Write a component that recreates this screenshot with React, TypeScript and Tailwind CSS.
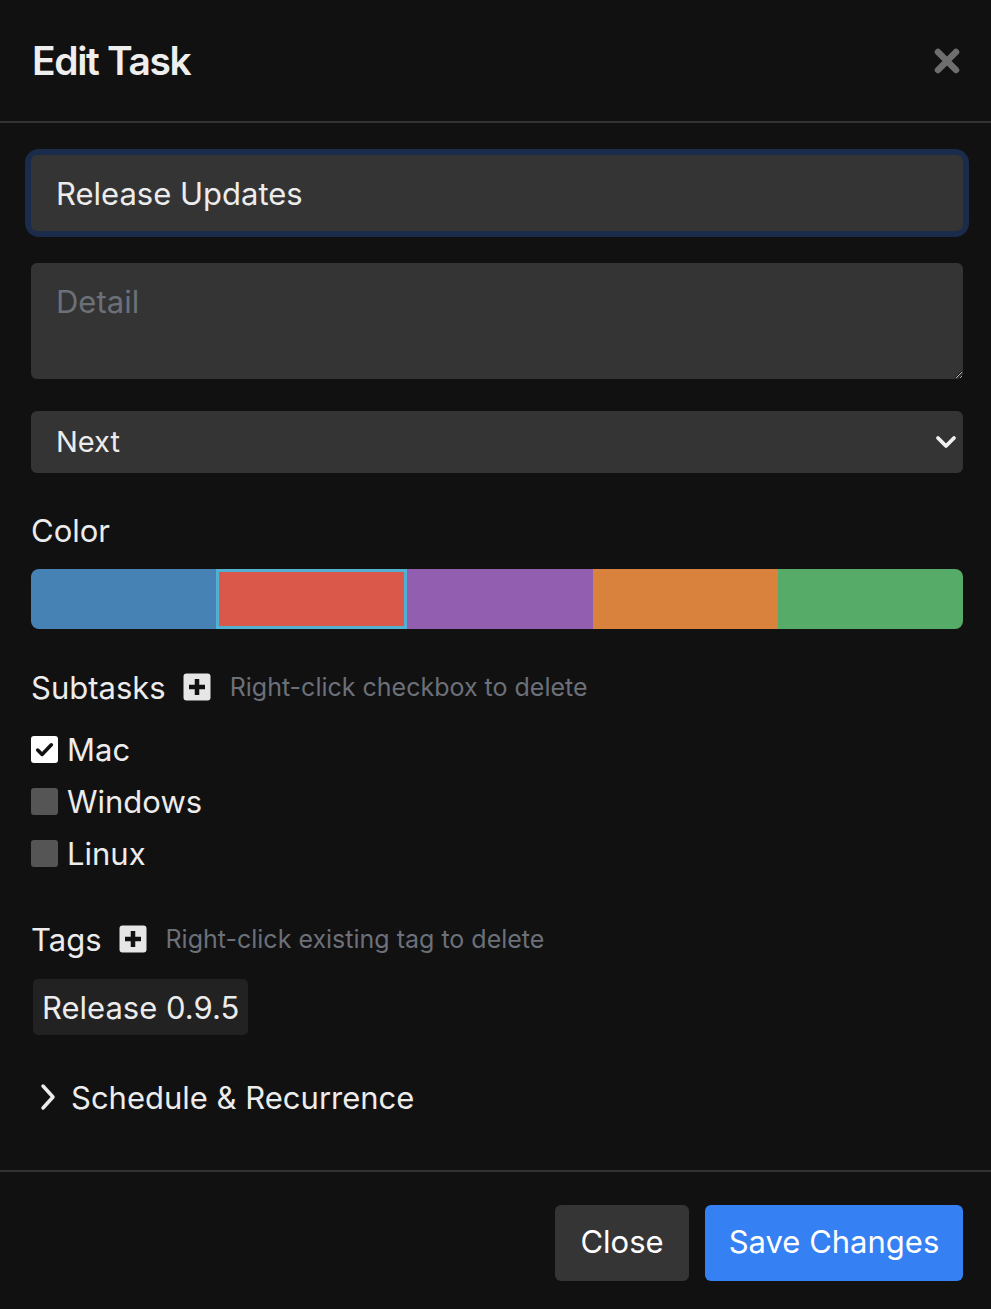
import React from "react";

const font = { fontFamily: "Inter, 'Noto Sans', sans-serif" };

function PlusBox() {
  return (
    <svg width="28" height="28" viewBox="0 0 28 28" className="shrink-0">
      <rect x="0.5" y="0.5" width="27" height="27" rx="3" fill="#e6e6e6" />
      <path d="M14 6v16M6 14h16" stroke="#111" strokeWidth="4.5" strokeLinecap="butt" />
    </svg>
  );
}

function Check({ checked, label }: { checked: boolean; label: string }) {
  return (
    <div className="flex items-center h-[52px]">
      <div
        className={`w-[27px] h-[27px] rounded-[3px] flex items-center justify-center ${
          checked ? "bg-white" : "bg-[#555555]"
        }`}
      >
        {checked && (
          <svg width="21" height="21" viewBox="0 0 20 20">
            <path d="M3.5 10.5l4.2 4.2 8.8-9.2" fill="none" stroke="#111" strokeWidth="3.4" strokeLinecap="round" strokeLinejoin="round" />
          </svg>
        )}
      </div>
      <span className="ml-[9px] text-[31px] text-[#ececec] leading-none">{label}</span>
    </div>
  );
}

export default function App() {
  const colors = ["#4682b4", "#d9584a", "#925fb0", "#d9823e", "#57ab69"];
  return (
    <div className="w-[991px] h-[1309px] bg-[#111111] flex flex-col text-[#ececec]" style={font}>
      <div className="h-[123px] flex items-center justify-between pl-[32px] pr-[30px] border-b-2 border-[#333333] shrink-0">
        <h1 className="text-[39px] font-semibold tracking-[-0.035em] text-[#eeeeee] leading-none">Edit Task</h1>
        <svg width="28" height="28" viewBox="0 0 28 28">
          <path d="M5 5l18 18M23 5L5 23" stroke="#6e6e6e" strokeWidth="6.5" strokeLinecap="round" />
        </svg>
      </div>

      <div className="flex-1 flex flex-col pl-[31px] pr-[28px] pt-[32px]">
        <div className="rounded-[8px] ring-[6px] ring-[#1b2b4b]">
          <input
            className="w-full h-[76px] bg-[#343434] rounded-[6px] px-[25px] text-[31px] text-[#ececec] outline-none"
            defaultValue="Release Updates"
          />
        </div>
        <textarea
          className="mt-[32px] w-full h-[116px] bg-[#343434] rounded-[6px] px-[25px] pt-[16px] text-[31px] text-[#ececec] placeholder-[#6b7079] outline-none block"
          placeholder="Detail"
        />
        <div className="mt-[32px] h-[62px] bg-[#343434] rounded-[6px] flex items-center justify-between pl-[25px] pr-[5px]">
          <span className="text-[29px] text-[#ececec]">Next</span>
          <svg width="24" height="18" viewBox="0 0 24 18">
            <path d="M4 5l8 8 8-8" fill="none" stroke="#f0f0f0" strokeWidth="3.8" strokeLinecap="round" strokeLinejoin="round" />
          </svg>
        </div>

        <div className="mt-[38px] h-[38px] flex items-center text-[31px] leading-none">Color</div>
        <div className="mt-[20px] h-[60px] rounded-[8px] overflow-hidden flex">
          {colors.map((c, i) => (
            <div
              key={c}
              className={`flex-1 ${i === 1 ? "border-[3px] border-[#54b0d2]" : ""}`}
              style={{ backgroundColor: c }}
            />
          ))}
        </div>

        <div className="mt-[38px] h-[40px] flex items-center">
          <span className="text-[31px] leading-none">Subtasks</span>
          <span className="ml-[17px]"><PlusBox /></span>
          <span className="ml-[19px] text-[25px] text-[#6b7079] leading-none">Right-click checkbox to delete</span>
        </div>
        <div className="mt-[16px] flex flex-col">
          <Check checked label="Mac" />
          <Check checked={false} label="Windows" />
          <Check checked={false} label="Linux" />
        </div>

        <div className="mt-[40px] h-[40px] flex items-center">
          <span className="text-[31px] leading-none">Tags</span>
          <span className="ml-[17px]"><PlusBox /></span>
          <span className="ml-[19px] text-[25px] text-[#6b7079] leading-none">Right-click existing tag to delete</span>
        </div>
        <div className="mt-[20px] flex">
          <div className="ml-[2px] h-[56px] px-[9px] rounded-[5px] bg-[#222222] flex items-center text-[31px] leading-none">
            Release 0.9.5
          </div>
        </div>

        <div className="mt-[42px] h-[40px] flex items-center">
          <svg width="18" height="28" viewBox="0 0 18 28" className="ml-[8px]">
            <path d="M4 3l10 11-10 11" fill="none" stroke="#ececec" strokeWidth="3.5" strokeLinecap="round" strokeLinejoin="round" />
          </svg>
          <span className="ml-[14px] text-[31px] leading-none">Schedule &amp; Recurrence</span>
        </div>
      </div>

      <div className="h-[139px] border-t-2 border-[#333333] flex items-center justify-end gap-[16px] px-[28px] pt-[4px] shrink-0">
        <button className="h-[76px] w-[134px] rounded-[6px] bg-[#353535] text-[31px] text-white">Close</button>
        <button className="h-[76px] w-[258px] rounded-[6px] bg-[#3580f3] text-[31px] text-white">Save Changes</button>
      </div>
    </div>
  );
}
